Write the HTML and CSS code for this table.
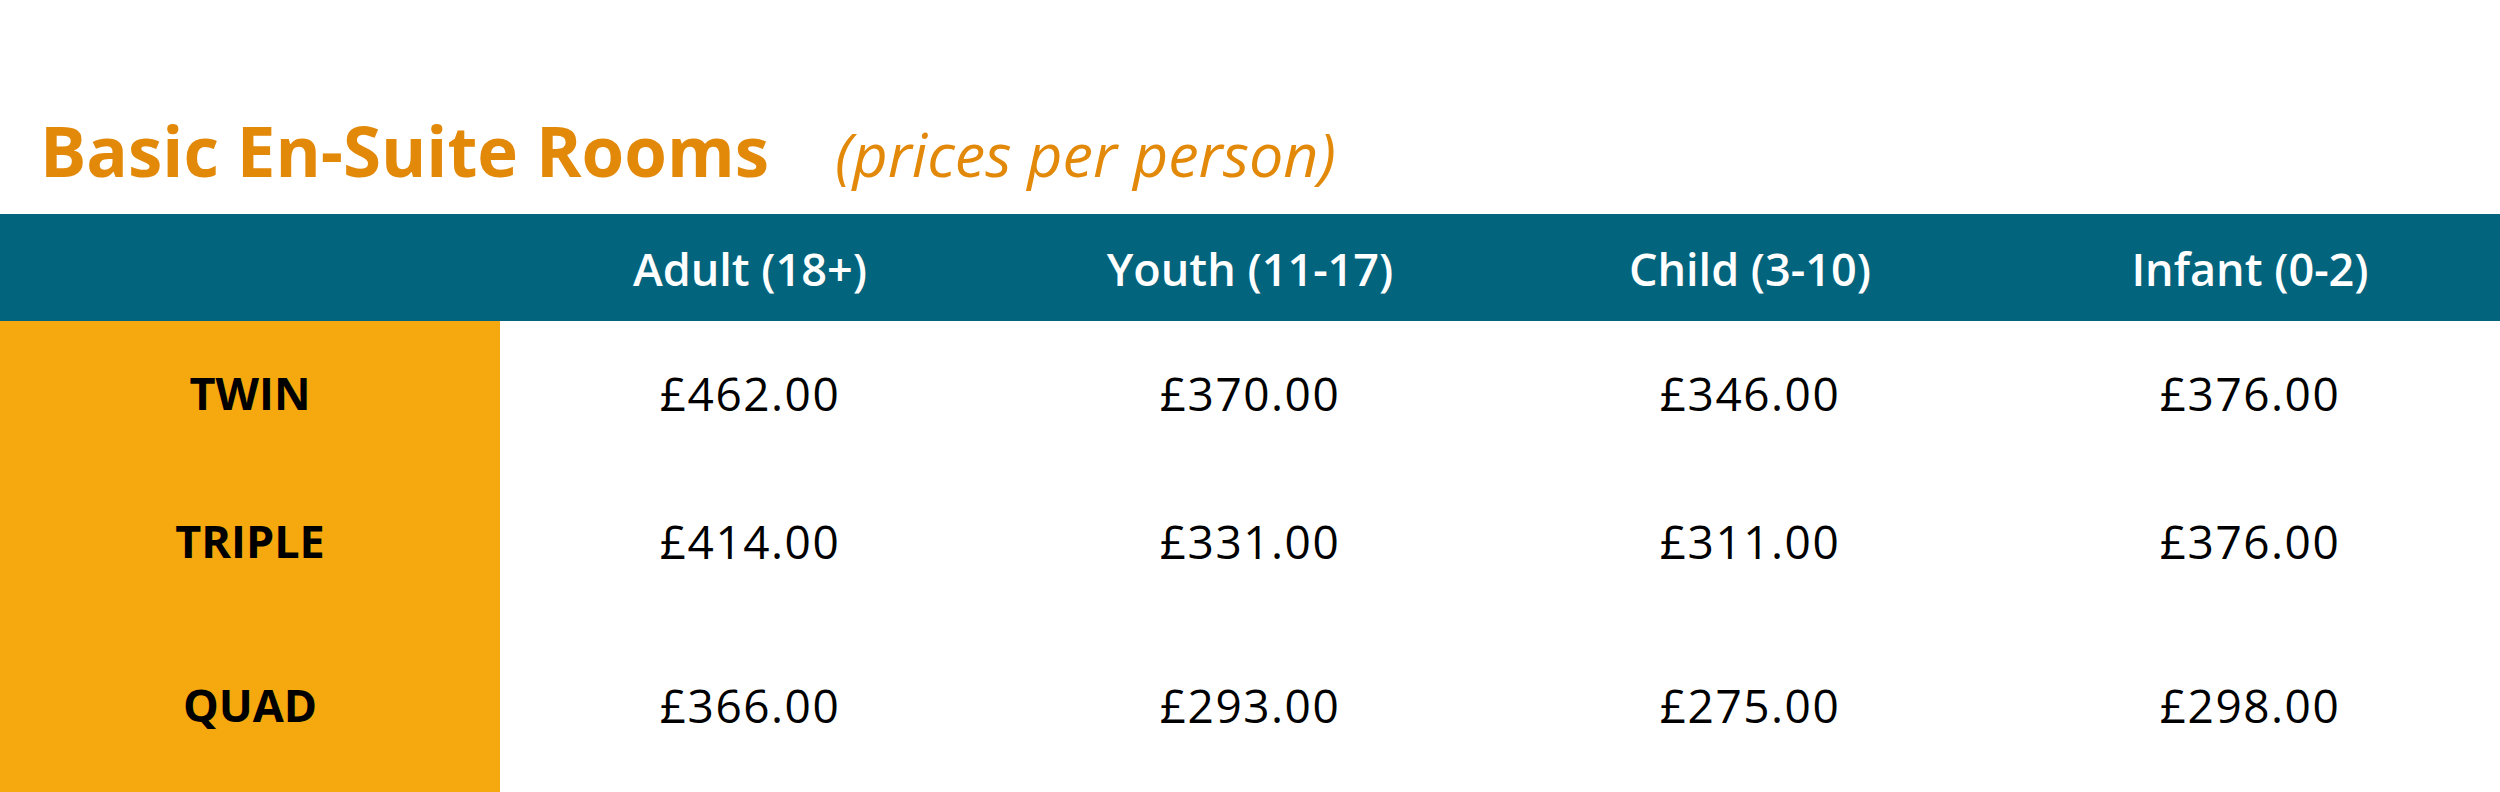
FILE: index.html
```html
<!DOCTYPE html>
<html lang="en">
<head>
<meta charset="utf-8">
<title>Basic En-Suite Rooms</title>
<link rel="stylesheet" href="styles.css">
</head>
<body>
<div class="page">
  <div class="title-row">
    <h1 class="title">Basic En-Suite Rooms</h1>
    <span class="subtitle">(prices per person)</span>
  </div>
  <div class="table">
    <div class="row head">
      <div class="cell label-cell"></div>
      <div class="cell">Adult (18+)</div>
      <div class="cell">Youth (11-17)</div>
      <div class="cell">Child (3-10)</div>
      <div class="cell">Infant (0-2)</div>
    </div>
    <div class="row body r1">
      <div class="cell label-cell">TWIN</div>
      <div class="cell">£462.00</div>
      <div class="cell">£370.00</div>
      <div class="cell">£346.00</div>
      <div class="cell">£376.00</div>
    </div>
    <div class="row body r2">
      <div class="cell label-cell">TRIPLE</div>
      <div class="cell">£414.00</div>
      <div class="cell">£331.00</div>
      <div class="cell">£311.00</div>
      <div class="cell">£376.00</div>
    </div>
    <div class="row body r3">
      <div class="cell label-cell">QUAD</div>
      <div class="cell">£366.00</div>
      <div class="cell">£293.00</div>
      <div class="cell">£275.00</div>
      <div class="cell">£298.00</div>
    </div>
  </div>
</div>
</body>
</html>
```
FILE: styles.css
```css
html, body {
  margin: 0;
  padding: 0;
  background: #ffffff;
}
.page {
  width: 2500px;
  height: 792px;
  overflow: hidden;
  font-family: "Open Sans", "Liberation Sans", sans-serif;
}
.title-row {
  height: 214px;
  box-sizing: border-box;
  display: flex;
  align-items: baseline;
  padding-left: 40px;
  padding-top: 116px;
  gap: 66px;
}
.title {
  margin: 0;
  font-size: 69px;
  font-weight: 700;
  color: #e3890a;
  line-height: 1;
}
.subtitle {
  font-size: 61px;
  font-style: italic;
  font-weight: 400;
  color: #e3890a;
  line-height: 1;
}
.table {
  display: flex;
  flex-direction: column;
}
.row {
  display: grid;
  grid-template-columns: repeat(5, 500px);
}
.cell {
  display: flex;
  align-items: center;
  justify-content: center;
  font-size: 45px;
  line-height: 1;
}
.head {
  height: 107px;
  background: #03647e;
}
.head .cell {
  color: #ffffff;
  font-weight: 600;
  padding-top: 2px;
}
.body .cell {
  color: #000000;
  font-weight: 400;
  font-size: 46px;
  letter-spacing: 1.5px;
}
.body .label-cell {
  background: #f5a90f;
  font-weight: 700;
  font-size: 45px;
  letter-spacing: 0;
}
.r1 { height: 143px; }
.r2 { height: 153px; }
.r3 { height: 175px; }
```
